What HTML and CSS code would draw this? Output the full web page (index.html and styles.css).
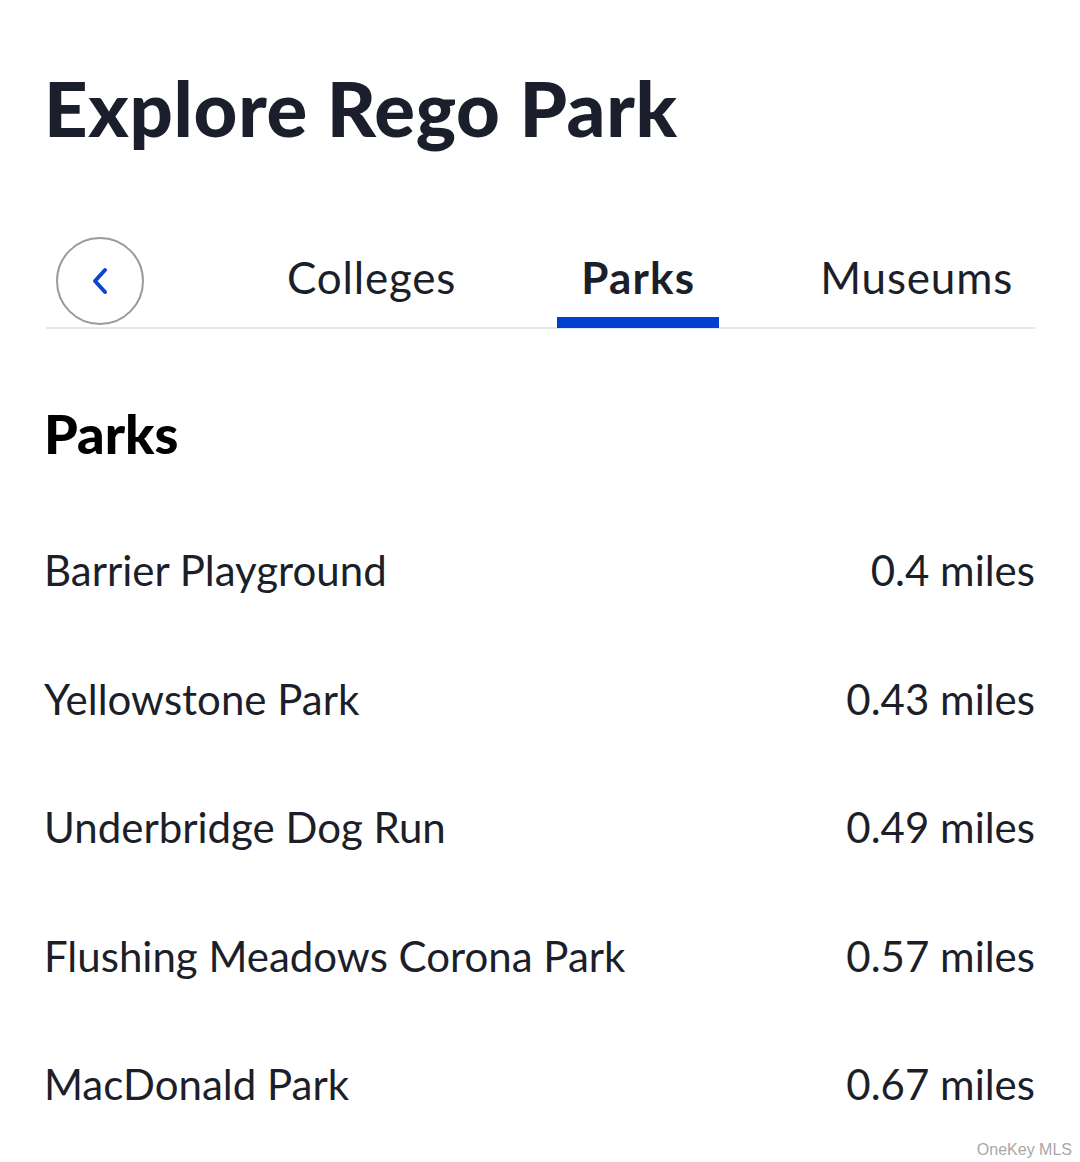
FILE: index.html
```html
<!DOCTYPE html>
<html>
<head>
	<link rel="stylesheet" href="styles.css">
</head>
<body>
	<div class="page">
		<h1 class="title">Explore Rego Park</h1>

		<div class="tabs">
			<button class="back" type="button">
				<svg width="20" height="28" viewBox="0 0 20 28">
					<path d="M15 3 L5 14 L15 25" fill="none" stroke="#0b45d0" stroke-width="4" stroke-linecap="round" stroke-linejoin="round"/>
				</svg>
			</button>
			<div class="tab-list">
				<div class="tab">Colleges</div>
				<div class="tab active">Parks</div>
				<div class="tab">Museums</div>
			</div>
		</div>

		<h2 class="section">Parks</h2>

		<ul class="places">
			<li class="place"><span>Barrier Playground</span><span>0.4 miles</span></li>
			<li class="place"><span>Yellowstone Park</span><span>0.43 miles</span></li>
			<li class="place"><span>Underbridge Dog Run</span><span>0.49 miles</span></li>
			<li class="place"><span>Flushing Meadows Corona Park</span><span>0.57 miles</span></li>
			<li class="place"><span>MacDonald Park</span><span>0.67 miles</span></li>
		</ul>
	</div>
	<div class="credit">OneKey MLS</div>
</body>
</html>
```

FILE: styles.css
```css
html {
	background:#fff;
}
body {
	margin:0;
	font-family:Lato, "Open Sans", sans-serif;
	color:#1c1f29;
}
.page {
	padding:0 45px 0 44px;
}
.title {
	margin:0;
	padding-top:70px;
	font-size:76px;
	line-height:75px;
	font-weight:900;
	letter-spacing:0.7px;
	color:#1b1f2b;
}
.tabs {
	display:flex;
	align-items:center;
	margin-top:92px;
	margin-left:2px;
	border-bottom:2px solid #e6e7ea;
	height:90px;
}
.back {
	width:88px;
	height:88px;
	margin-left:10px;
	margin-bottom:2px;
	border-radius:50%;
	border:2px solid #9a9a9a;
	background:#fff;
	display:flex;
	align-items:center;
	justify-content:center;
	padding:0;
}
.tab-list {
	display:flex;
	margin-left:auto;
	gap:77px;
	align-self:stretch;
}
.tab {
	padding:0 24px;
	font-size:44px;
	letter-spacing:0.8px;
	display:flex;
	align-items:center;
	color:#1c1f29;
	border-bottom:11px solid transparent;
	margin-bottom:-1px;
}
.tab:last-child {
	padding-right:22px;
}
.tab.active {
	font-weight:700;
	letter-spacing:1.2px;
	border-bottom-color:#0041d2;
}
.section {
	margin:0;
	margin-top:75px;
	font-size:54px;
	line-height:60px;
	font-weight:900;
	color:#000;
}
.places {
	list-style:none;
	margin:76px 0 0;
	padding:0;
}
.place {
	display:flex;
	justify-content:space-between;
	font-size:42px;
	line-height:60px;
	height:128.5px;
}
.credit {
	position:absolute;
	right:8px;
	top:1141px;
	font-family:"Liberation Sans", Arial, sans-serif;
	font-size:16px;
	color:#a8a8a8;
}
```
